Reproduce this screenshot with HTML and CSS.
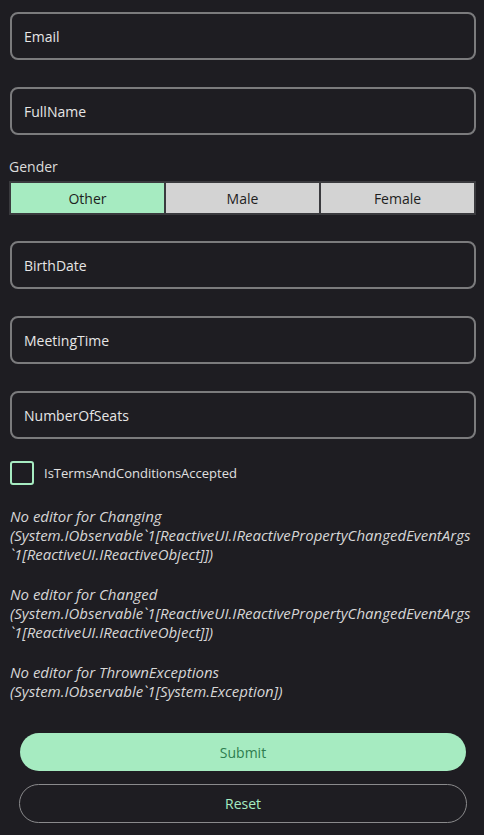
FILE: index.html
```html
<!DOCTYPE html>
<html>
<head>
<meta charset="utf-8">
<link rel="stylesheet" href="styles.css">
</head>
<body>
<div class="form">
  <div class="field">Email</div>
  <div class="field">FullName</div>
  <div class="label">Gender</div>
  <div class="segmented">
    <div class="seg active">Other</div>
    <div class="seg">Male</div>
    <div class="seg">Female</div>
  </div>
  <div class="field">BirthDate</div>
  <div class="field">MeetingTime</div>
  <div class="field">NumberOfSeats</div>
  <div class="check-row">
    <span class="checkbox"></span>
    <span class="check-label">IsTermsAndConditionsAccepted</span>
  </div>
  <p class="note">No editor for Changing<br>(System.IObservable`1[ReactiveUI.IReactivePropertyChangedEventArgs<br>`1[ReactiveUI.IReactiveObject]])</p>
  <p class="note">No editor for Changed<br>(System.IObservable`1[ReactiveUI.IReactivePropertyChangedEventArgs<br>`1[ReactiveUI.IReactiveObject]])</p>
  <p class="note">No editor for ThrownExceptions<br>(System.IObservable`1[System.Exception])</p>
  <div class="actions">
    <button class="btn submit">Submit</button>
    <button class="btn reset">Reset</button>
  </div>
</div>
</body>
</html>
```
FILE: styles.css
```css
html, body {
  margin: 0;
  padding: 0;
  background: #1e1d22;
  height: 100%;
}
body {
  font-family: "Open Sans", "Noto Sans", sans-serif;
  color: #e4e4e4;
  font-size: 14px;
}
.form {
  padding: 12px 8px 0 10px;
  width: 466px;
}
.field {
  box-sizing: border-box;
  height: 48px;
  border: 2px solid #7b7b7d;
  border-radius: 8px;
  padding-left: 12px;
  display: flex;
  align-items: center;
  margin-bottom: 27px;
  color: #e6e6e6;
}
.label {
  margin-left: -1px;
  line-height: 20px;
  margin-top: -5px;
  margin-bottom: 4px;
  color: #dcdcdc;
}
.segmented {
  margin-left: -1px;
  display: grid;
  grid-template-columns: 1fr 1fr 1fr;
  gap: 2px;
  padding: 2px;
  background: #3a3a3e;
  width: 463px;
  margin-bottom: 26px;
}
.seg {
  height: 30px;
  display: flex;
  align-items: center;
  justify-content: center;
  background: #d3d3d3;
  color: #1e1e1e;
}
.seg.active {
  background: #a6ebc1;
}
.check-row {
  display: flex;
  align-items: center;
  margin-top: -5px;
  margin-bottom: 22px;
}
.checkbox {
  box-sizing: border-box;
  width: 24px;
  height: 24px;
  border: 2px solid #a6ebc1;
  border-radius: 3px;
  margin-right: 10px;
}
.check-label {
  color: #e0e0e0;
  font-size: 13px;
}
.note {
  margin: 0 0 21px 0;
  font-style: italic;
  font-size: 15px;
  line-height: 19px;
  color: #d6d6d6;
  white-space: nowrap;
}
.actions {
  display: flex;
  flex-direction: column;
  gap: 13px;
  padding: 11px 0 0 9px;
  width: 448px;
}
.btn {
  font-family: "Open Sans", "Noto Sans", sans-serif;
  font-size: 14px;
  border-radius: 20px;
  cursor: pointer;
}
.submit {
  height: 38px;
  margin: 0 1px;
  border: none;
  background: #a6ebc1;
  color: #2e7d4f;
}
.reset {
  height: 39px;
  background: transparent;
  border: 1px solid #8a8a8c;
  color: #a6ebc1;
}
```
